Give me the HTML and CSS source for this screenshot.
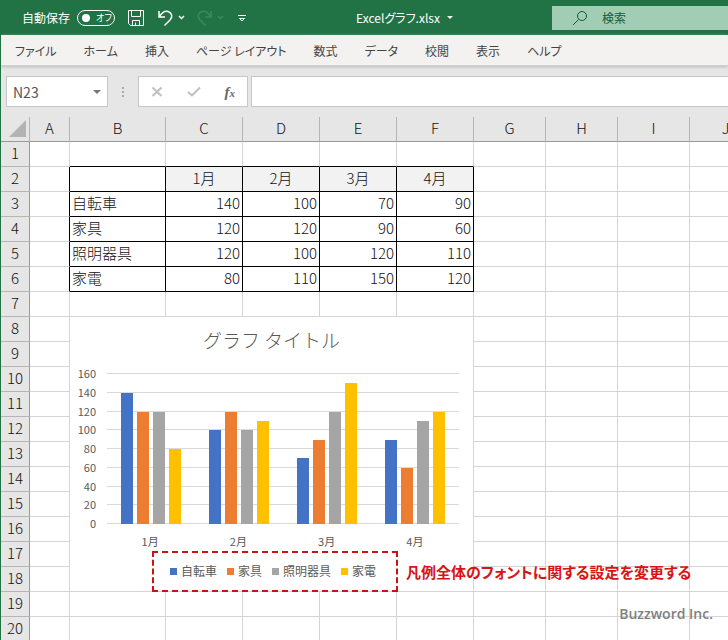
FILE: index.html
```
<!DOCTYPE html>
<html lang="ja">
<head>
    <meta charset="UTF-8">
    <meta name="viewport" content="width=device-width, initial-scale=1.0">
    <title>Excelグラフ.xlsx</title>
    <link rel="stylesheet" href="styles.css">
</head>
<body>
    <header class="titlebar">
        <div class="quick">
            <label class="autosave">
                <span>自動保存</span>
                <input type="checkbox" class="autosave-check">
                <span class="switch">オフ</span>
            </label>
            <button type="button" class="save" aria-label="上書き保存">
                <svg width="18" height="18" viewBox="0 0 18 18"><path d="M1.5 1.5h15v15h-13l-2-2zM4.500 1.500v6h9v-6M5.500 16.500v-5h7v5M8.500 13.500v3"/></svg>
            </button>
            <button type="button" class="undo" aria-label="元に戻す">
                <svg width="28" height="18" viewBox="0 0 28 18"><path class="thick" d="M2 2v6h6M2.500 7.500C5 3.500 8 1.500 11 2.500c4 1.300 5 5.500 2 8.500l-5.500 5.500"/><path class="thick" d="M22 7l2.500 2.500L27 7"/></svg>
            </button>
            <button type="button" class="redo" aria-label="やり直し" disabled>
                <svg width="28" height="18" viewBox="0 0 28 18"><path class="thick" d="M15 2v6H9M14.500 7.500C12 3.500 9 1.500 6 2.500c-4 1.300-5 5.500-2 8.500l5.500 5.500"/><path class="thick" d="M22 7l2.500 2.500L27 7"/></svg>
            </button>
            <button type="button" class="more" aria-label="クイック アクセス ツール バーのユーザー設定">
                <svg width="8" height="8" viewBox="0 0 8 8"><path d="M0 1.500h8M1.500 4.500L4 7l2.500-2.500z"/></svg>
            </button>
        </div>
        <button type="button" class="file">Excelグラフ.xlsx
            <svg width="6" height="4" viewBox="0 0 6 4"><path class="solid" d="M0 0h6L3 3z"/></svg>
        </button>
        <label class="search">
            <svg width="16" height="16" viewBox="0 0 16 16"><circle cx="10" cy="6" r="4.500"/><path d="M6.500 9.500L1 15"/></svg>
            <input type="text" placeholder="検索" aria-label="検索">
        </label>
    </header>

    <nav class="tabs">
        <button type="button">ファイル</button>
        <button type="button">ホーム</button>
        <button type="button">挿入</button>
        <button type="button">ページ レイアウト</button>
        <button type="button">数式</button>
        <button type="button">データ</button>
        <button type="button">校閲</button>
        <button type="button">表示</button>
        <button type="button">ヘルプ</button>
    </nav>

    <div class="formula-bar">
        <div class="name-box">
            <input type="text" value="N23" aria-label="名前ボックス">
            <svg width="8" height="4" viewBox="0 0 8 4"><path d="M0 0h8L4 4z"/></svg>
        </div>
        <svg class="grip" width="2" height="10" viewBox="0 0 2 10"><path d="M0 0h2v2H0zM0 4h2v2H0zM0 8h2v2H0z"/></svg>
        <div class="formula-buttons">
            <button type="button" aria-label="キャンセル" disabled>
                <svg width="12" height="12" viewBox="0 0 12 12"><path d="M1.500 1.500l9 8.500M10.500 1.500l-9 8.500"/></svg>
            </button>
            <button type="button" aria-label="入力" disabled>
                <svg width="14" height="12" viewBox="0 0 14 12"><path d="M1 6L5 9.500l8-8"/></svg>
            </button>
            <button type="button" class="fx" aria-label="関数の挿入"><span>f</span><sub>x</sub></button>
        </div>
        <input type="text" class="formula" aria-label="数式バー">
    </div>

    <main class="sheet">
        <table class="cells">
            <colgroup>
                <col class="col-num"><col class="col-a"><col class="col-b">
                <col class="col-data" span="4">
                <col class="col-rest" span="4">
            </colgroup>
            <thead>
                <tr>
                    <th class="corner"><svg width="17" height="17" viewBox="0 0 17 17"><path d="M17 0v17H0z"/></svg></th>
                    <th>A</th><th>B</th><th>C</th><th>D</th><th>E</th><th>F</th><th>G</th><th>H</th><th>I</th><th>J</th>
                </tr>
            </thead>
            <tbody id="rows"></tbody>
        </table>

        <section class="chart">
            <h2>グラフ タイトル</h2>
            <div class="chart-body">
                <div class="axis-y">
                    <span>160</span><span>140</span><span>120</span><span>100</span><span>80</span><span>60</span><span>40</span><span>20</span><span>0</span>
                </div>
                <div class="plot">
                    <div class="lines"><i></i><i></i><i></i><i></i><i></i><i></i><i></i><i></i><i></i></div>
                    <div class="bars" id="bars"></div>
                </div>
            </div>
            <div class="axis-x"><span>1月</span><span>2月</span><span>3月</span><span>4月</span></div>
            <div class="legend">
                <span><i class="s0"></i>自転車</span>
                <span><i class="s1"></i>家具</span>
                <span><i class="s2"></i>照明器具</span>
                <span><i class="s3"></i>家電</span>
            </div>
        </section>

        <div class="callout-frame"></div>
        <p class="callout">凡例全体のフォントに関する設定を変更する</p>
        <p class="credit">Buzzword Inc.</p>
    </main>

    <script>
        const months = ['1月', '2月', '3月', '4月'];
        const items = [
            ['自転車', 140, 100, 70, 90],
            ['家具', 120, 120, 90, 60],
            ['照明器具', 120, 100, 120, 110],
            ['家電', 80, 110, 150, 120]
        ];

        // 2行目から見出しとデータ
        const table = [['', ...months], ...items];
        const tbody = document.getElementById('rows');
        for (let r = 1; r <= 20; r++) {
            const row = tbody.insertRow();
            const th = document.createElement('th');
            th.textContent = r;
            row.appendChild(th);
            for (let c = 0; c < 10; c++) {
                const cell = row.insertCell();
                const data = table[r - 2];
                const inCols = c >= 1 && c <= 5;
                if (data && inCols) {
                    cell.textContent = data[c - 1];
                    cell.className = 'data';
                    if (c > 1) cell.classList.add(r === 2 ? 'month' : 'number');
                }
                if (data && c === 0) cell.className = 'edge-right';
                if (r === 1 && inCols) cell.className = 'edge-bottom';
            }
        }

        // グラフの棒
        const bars = document.getElementById('bars');
        months.forEach(function(month, m) {
            const group = document.createElement('div');
            group.className = 'group';
            items.forEach(function(item, i) {
                const bar = document.createElement('div');
                bar.className = 's' + i;
                bar.style.height = item[m + 1] / 160 * 100 + '%';
                group.appendChild(bar);
            });
            bars.appendChild(group);
        });
    </script>
</body>
</html>
```
FILE: styles.css
```
* {
    box-sizing: border-box;
}
body {
    margin: 0;
    height: 100vh;
    overflow: hidden;
    display: flex;
    flex-direction: column;
    font-family: "Noto Sans CJK JP", sans-serif;
    font-size: 12px;
    background-color: #e6e6e6;
    border-left: 1px solid #217346;
}
button, input {
    font: inherit;
    color: inherit;
    border: none;
    padding: 0;
    background: none;
}
svg {
    display: block;
    flex: none;
}

/* タイトルバー */
.titlebar {
    flex: none;
    height: 35px;
    display: grid;
    grid-template-columns: 256px 1fr 176px;
    align-items: center;
    background-color: #217346;
    color: #fff;
    font-feature-settings: "palt";
    white-space: nowrap;
}
.titlebar button {
    display: flex;
    align-items: center;
}
.titlebar svg {
    fill: none;
    stroke: currentColor;
}
.titlebar .thick {
    stroke-width: 1.5;
}
.titlebar .solid {
    fill: currentColor;
    stroke: none;
}
.quick {
    display: flex;
    align-items: center;
    padding-left: 21px;
}
.autosave {
    display: flex;
    align-items: center;
    gap: 7px;
    position: relative;
}
.autosave-check {
    position: absolute;
    opacity: 0;
}
.switch {
    display: flex;
    align-items: center;
    gap: 6px;
    width: 38px;
    height: 16px;
    padding-left: 4px;
    border: 1px solid #fff;
    border-radius: 8px;
    font-size: 9px;
}
.switch::before {
    content: "";
    flex: none;
    width: 8px;
    height: 8px;
    border-radius: 50%;
    background-color: #fff;
}
.save {
    margin-left: 12px;
}
.undo {
    margin-left: 12px;
}
.redo {
    margin-left: 11px;
    color: #3f8660;
}
.more {
    margin-left: 14px;
}
.file {
    justify-self: center;
    gap: 7px;
}
.search {
    display: flex;
    align-items: center;
    gap: 14px;
    height: 24px;
    padding-left: 20px;
    background-color: #a0cdb3;
    color: #185c37;
}
.search input {
    flex: 1;
    min-width: 0;
}
.search input::placeholder {
    color: #185c37;
}

/* リボンのタブ */
.tabs {
    flex: none;
    display: flex;
    gap: 27px;
    height: 31px;
    padding-left: 14px;
    background-color: #f3f2f1;
    color: #444;
    border-bottom: 1px solid #d0d0d0;
    box-shadow: 0 1px 3px #bbb;
    font-feature-settings: "palt";
    white-space: nowrap;
}

/* 数式バー */
.formula-bar {
    flex: none;
    display: flex;
    align-items: center;
    height: 51px;
    padding-left: 5px;
}
.name-box, .formula-buttons, .formula {
    height: 31px;
    background-color: #fff;
    border: 1px solid #c6c6c6;
}
.name-box {
    display: flex;
    align-items: center;
    width: 102px;
    padding: 0 6px;
    color: #555;
    font-size: 14px;
}
.name-box input {
    flex: 1;
    min-width: 0;
}
.name-box svg {
    fill: #777;
}
.grip {
    margin: 0 14px;
    fill: #aaa;
}
.formula-buttons {
    display: flex;
    align-items: center;
    justify-content: space-between;
    width: 110px;
    padding: 0 12px;
}
.formula-buttons svg {
    fill: none;
    stroke: #c0c0c0;
    stroke-width: 2;
}
.fx {
    color: #666;
    font-family: "Liberation Serif", serif;
    font-style: italic;
    font-weight: bold;
    font-size: 15px;
    line-height: 16px;
}
.fx sub {
    font-size: 11px;
    line-height: 0;
    vertical-align: baseline;
}
.formula {
    flex: 1;
    min-width: 0;
    margin-left: 3px;
    border-right: none;
}

/* シート */
.sheet {
    flex: 1;
    min-height: 0;
    position: relative;
    overflow: hidden;
}
.cells {
    width: 760px;
    table-layout: fixed;
    border-collapse: separate;
    border-spacing: 0;
    background-color: #fff;
    color: #111;
    font-size: 15px;
    font-weight: 300;
    line-height: 22px;
}
.col-num { width: 29px; }
.col-a { width: 40px; }
.col-b { width: 96px; }
.col-data { width: 77px; }
.col-rest { width: 72px; }
.cells th, .cells td {
    height: 25px;
    padding: 0 2px 2px;
    border-right: 1px solid #d4d4d4;
    border-bottom: 1px solid #d4d4d4;
    white-space: nowrap;
}
.cells th {
    padding: 0 0 2px;
    background-color: #e6e6e6;
    font-weight: 300;
    border-color: #b5b5b5;
}
.cells thead th {
    border-bottom-color: #999;
}
.cells tbody th {
    border-right-color: #999;
}
.corner svg {
    margin-left: 8px;
    fill: #b3b3b3;
}
.cells .data {
    border-color: #000;
}
.cells .month {
    text-align: center;
    background-color: #f2f2f2;
}
.cells .number {
    text-align: right;
}
.cells .edge-right {
    border-right-color: #000;
}
.cells .edge-bottom {
    border-bottom-color: #000;
}

/* グラフ */
.chart {
    position: absolute;
    left: 68px;
    top: 199px;
    width: 405px;
    height: 276px;
    background-color: #fff;
    border: 1px solid #d4d4d4;
    color: #595959;
    font-size: 11px;
}
.chart h2 {
    margin: 9px 0 10px;
    text-align: center;
    font-size: 19px;
    font-weight: 300;
    line-height: 28px;
}
.chart-body {
    display: flex;
    align-items: center;
    gap: 11px;
    padding-right: 14px;
}
.axis-y {
    display: flex;
    flex-direction: column;
    width: 26px;
    height: 169px;
    text-align: right;
}
.axis-y span {
    flex: 1;
    line-height: 18px;
}
.plot {
    flex: 1;
    display: grid;
    align-items: end;
}
.lines, .bars {
    grid-area: 1 / 1;
    display: flex;
}
.lines {
    flex-direction: column;
    justify-content: space-between;
    height: 151px;
}
.lines i {
    height: 1px;
    background-color: #d9d9d9;
}
.bars {
    height: 150px;
}
.group {
    flex: 1;
    display: flex;
    justify-content: center;
    align-items: flex-end;
    gap: 4px;
}
.group div {
    width: 12px;
}
.s0 { background-color: #4472c4; }
.s1 { background-color: #ed7d31; }
.s2 { background-color: #a5a5a5; }
.s3 { background-color: #ffc000; }
.axis-x {
    display: flex;
    padding: 0 14px 0 36px;
    line-height: 16px;
}
.axis-x span {
    flex: 1;
    text-align: center;
}
.legend {
    display: flex;
    justify-content: center;
    gap: 10px;
    padding: 12px 0 0 3px;
    font-size: 12px;
    line-height: 20px;
}
.legend span {
    display: flex;
    align-items: center;
    gap: 4px;
}
.legend i {
    width: 7px;
    height: 7px;
}

/* 注釈 */
.callout-frame {
    position: absolute;
    left: 151px;
    top: 434px;
    width: 246px;
    height: 41px;
    border: 2px dashed #c81414;
}
.callout {
    position: absolute;
    left: 405px;
    top: 443px;
    margin: 0;
    color: #d81414;
    font-size: 15px;
    font-weight: bold;
    line-height: 24px;
    font-feature-settings: "palt";
    white-space: nowrap;
}
.credit {
    position: absolute;
    right: 15px;
    bottom: 14px;
    margin: 0;
    color: #808080;
    font-family: "Open Sans", sans-serif;
    font-size: 14px;
    font-weight: 600;
    line-height: 24px;
}
```
